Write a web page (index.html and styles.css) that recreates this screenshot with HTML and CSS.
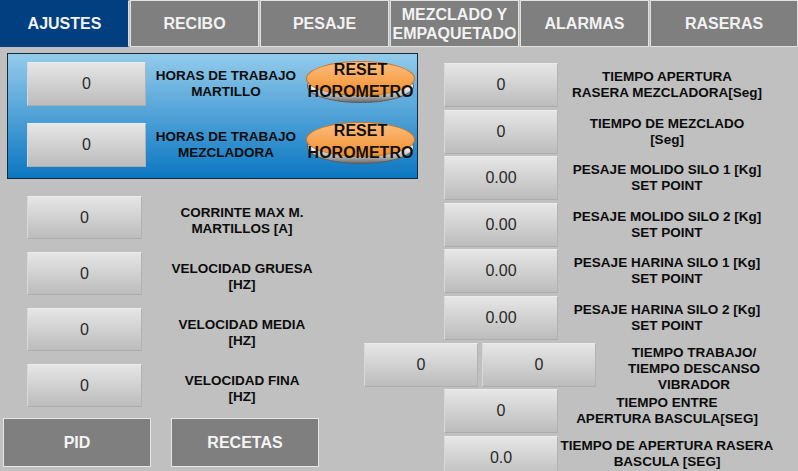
FILE: index.html
```html
<!DOCTYPE html>
<html lang="es">
<head>
    <meta charset="utf-8">
    <title>Ajustes</title>
    <link rel="stylesheet" href="styles.css">
</head>
<body>
    <!-- pestañas de pantallas -->
    <nav class="tabs">
        <a class="tab active">AJUSTES</a>
        <a class="tab">RECIBO</a>
        <a class="tab">PESAJE</a>
        <a class="tab two-lines">MEZCLADO Y<br>EMPAQUETADO</a>
        <a class="tab">ALARMAS</a>
        <a class="tab last">RASERAS</a>
    </nav>

    <main class="screen">
        <!-- columna izquierda -->
        <section class="col-left">
            <div class="panel">
                <div class="panel-row">
                    <div class="field">0</div>
                    <div class="label">HORAS DE TRABAJO<br>MARTILLO</div>
                    <div class="reset"><span>RESET<br>HOROMETRO</span></div>
                </div>
                <div class="panel-row">
                    <div class="field">0</div>
                    <div class="label">HORAS DE TRABAJO<br>MEZCLADORA</div>
                    <div class="reset"><span>RESET<br>HOROMETRO</span></div>
                </div>
            </div>

            <div class="rows">
                <div class="row">
                    <div class="field">0</div>
                    <div class="label">CORRINTE MAX M.<br>MARTILLOS [A]</div>
                </div>
                <div class="row">
                    <div class="field">0</div>
                    <div class="label">VELOCIDAD GRUESA<br>[HZ]</div>
                </div>
                <div class="row">
                    <div class="field">0</div>
                    <div class="label">VELOCIDAD MEDIA<br>[HZ]</div>
                </div>
                <div class="row">
                    <div class="field">0</div>
                    <div class="label">VELOCIDAD FINA<br>[HZ]</div>
                </div>
            </div>

            <div class="buttons">
                <a class="btn">PID</a>
                <a class="btn">RECETAS</a>
            </div>
        </section>

        <!-- columna derecha -->
        <section class="col-right">
            <div class="row">
                <div class="field">0</div>
                <div class="label">TIEMPO APERTURA<br>RASERA MEZCLADORA[Seg]</div>
            </div>
            <div class="row">
                <div class="field">0</div>
                <div class="label">TIEMPO DE MEZCLADO<br>[Seg]</div>
            </div>
            <div class="row">
                <div class="field">0.00</div>
                <div class="label">PESAJE MOLIDO SILO 1 [Kg]<br>SET POINT</div>
            </div>
            <div class="row">
                <div class="field">0.00</div>
                <div class="label">PESAJE MOLIDO SILO 2 [Kg]<br>SET POINT</div>
            </div>
            <div class="row">
                <div class="field">0.00</div>
                <div class="label">PESAJE HARINA SILO 1 [Kg]<br>SET POINT</div>
            </div>
            <div class="row">
                <div class="field">0.00</div>
                <div class="label">PESAJE HARINA SILO 2 [Kg]<br>SET POINT</div>
            </div>
            <div class="row vibrador">
                <div class="field">0</div>
                <div class="field">0</div>
                <div class="label">TIEMPO TRABAJO/<br>TIEMPO DESCANSO<br>VIBRADOR</div>
            </div>
            <div class="row">
                <div class="field">0</div>
                <div class="label">TIEMPO ENTRE<br>APERTURA BASCULA[SEG]</div>
            </div>
            <div class="row">
                <div class="field">0.0</div>
                <div class="label up">TIEMPO DE APERTURA RASERA<br>BASCULA [SEG]</div>
            </div>
        </section>
    </main>
</body>
</html>
```

FILE: styles.css
```css
* {
    box-sizing: border-box;
}

body {
    margin: 0;
    width: 798px;
    height: 471px;
    overflow: hidden;
    background: #c0c0c0;
    font-family: "Liberation Sans", Arial, sans-serif;
}

/* pestañas */
.tabs {
    display: flex;
    gap: 1px;
    height: 47px;
}

.tab {
    width: 129px;
    border: 1px solid #e2e2e2;
    background: #7f7f7f;
    color: #f2f2f2;
    font-weight: bold;
    font-size: 16px;
    display: flex;
    align-items: center;
    justify-content: center;
    text-align: center;
}

.tab.active {
    background: #013f80;
    border-color: #013f80 #dcdcdc #013f80 #013f80;
}

.tab.last { flex: 1; }

.two-lines { line-height: 19px; }

.screen {
    display: flex;
}

/* campos y textos */
.field {
    height: 44px;
    background: linear-gradient(#e6e6e6, #bcbcbc);
    border: 1px solid;
    border-color: #ececec #b2b2b2 #adadad #d8d8d8;
    display: flex;
    align-items: center;
    justify-content: center;
    font-size: 16px;
    color: #2a2a2a;
    flex-shrink: 0;
}

.label {
    text-align: center;
    font-weight: bold;
    font-size: 13.5px;
    line-height: 16px;
    color: #0c0c0c;
    flex-shrink: 0;
}

.row {
    display: flex;
    align-items: center;
}

/* columna izquierda */
.col-left {
    width: 430px;
    flex-shrink: 0;
}

.panel {
    margin: 6px 0 0 7px;
    width: 411px;
    height: 126px;
    border: 1px solid #17283a;
    background: linear-gradient(#93cbeb, #0b77c2);
    padding: 8px 0 0 19px;
    display: flex;
    flex-direction: column;
    gap: 17px;
}

.panel-row {
    display: flex;
    align-items: center;
    height: 44px;
}

.panel .field { width: 119px; }
.panel .label { width: 160px; }

.reset {
    position: relative;
    width: 109px;
    height: 42px;
    margin-top: -4px;
    display: flex;
    align-items: center;
    justify-content: center;
}

.reset::before {
    content: "";
    position: absolute;
    left: 1px;
    right: 1px;
    top: 8px;
    bottom: 0;
    border-radius: 50%;
    background: linear-gradient(#9a9a9a 0%, #f4f4f4 55%, #b4b4b4 80%, #6c6c6c 100%);
    border: 1px solid #5e5e5e;
}

.reset::after {
    content: "";
    position: absolute;
    left: 0;
    right: 0;
    top: 0;
    height: 33px;
    border-radius: 50%;
    background: linear-gradient(#fdbd7c, #f39030);
    border: 1px solid #c9762a;
}

.reset span {
    position: relative;
    z-index: 1;
    margin-top: -2px;
    font-weight: bold;
    font-size: 16px;
    line-height: 22px;
    color: #111;
    text-align: center;
    white-space: nowrap;
}

.rows {
    margin-top: 17px;
    padding-left: 27px;
    display: flex;
    flex-direction: column;
    gap: 13px;
}

.rows .field {
    width: 115px;
    height: 43px;
}

.rows .label {
    width: 200px;
    padding-top: 7px;
}

.buttons {
    margin-top: 11px;
    padding-left: 3px;
    display: flex;
    gap: 20px;
}

.btn {
    width: 148px;
    height: 49px;
    background: #7f7f7f;
    border: 1px solid #e6e6e6;
    color: #f4f4f4;
    font-weight: bold;
    font-size: 16px;
    display: flex;
    align-items: center;
    justify-content: center;
}

/* columna derecha */
.col-right {
    flex: 1;
    padding-top: 16px;
    display: flex;
    flex-direction: column;
    gap: 2.6px;
}

.col-right .row {
    height: 44px;
    padding-left: 14px;
}

.col-right .field { width: 114px; }
.col-right .label { width: 218px; }

.col-right .label.up { margin-top: -8px; }

.col-right .vibrador {
    margin-left: -66px;
    padding-left: 0;
    gap: 4px;
}

.vibrador .label {
    width: 188px;
    padding-top: 8px;
}
```
